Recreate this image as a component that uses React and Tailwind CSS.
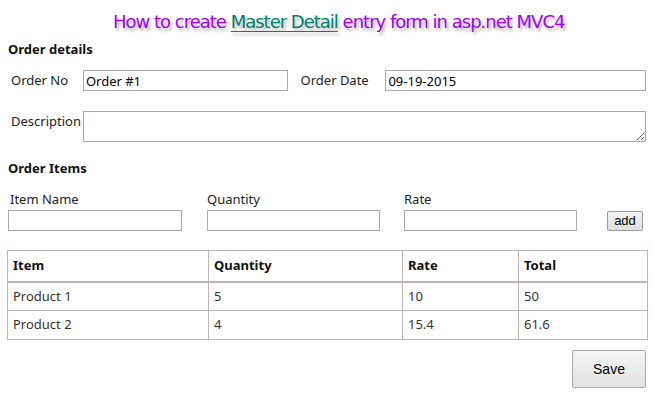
export default function App() {
  const rows = [
    ["Product 1", "5", "10", "50"],
    ["Product 2", "4", "15.4", "61.6"],
  ];
  return (
    <div className="w-[654px] h-[393px] bg-white text-[#222] overflow-hidden" style={{ fontFamily: '"Noto Sans", "Open Sans", sans-serif' }}>
      <div className="h-[40px] flex items-start pt-[8px] pl-[113px]">
        <div className="text-[18px] text-[#a000f0] whitespace-nowrap" style={{ fontFamily: '"DejaVu Sans", Verdana, sans-serif', textShadow: "2px 3px 3px rgba(0,0,0,0.3)", letterSpacing: "-1px" }}>
          How to create <span className="text-[#00806a] underline underline-offset-[3px]">Master Detail</span> entry form in asp.net MVC4
        </div>
      </div>
      <div className="px-[8px]">
        <div className="font-bold text-[13px] leading-[18px] text-[#111]">Order details</div>
        <div className="flex items-center mt-[12px] h-[21px] text-[13px]">
          <div className="w-[75px] pl-[3px]">Order No</div>
          <input className="w-[205px] h-[21px] border border-[#a9a9a9] px-[2px] text-[13px] text-black outline-none" defaultValue="Order #1" />
          <div className="w-[98px] pl-[13px]">Order Date</div>
          <input className="w-[261px] h-[21px] border border-[#a9a9a9] px-[2px] text-[13px] text-black outline-none" defaultValue="09-19-2015" />
        </div>
        <div className="flex items-start mt-[20px] text-[13px]">
          <div className="w-[75px] pl-[3px] pt-[1px]">Description</div>
          <textarea className="w-[564px] h-[31px] border border-[#a9a9a9] outline-none resize-y block" />
        </div>
        <div className="font-bold text-[13px] leading-[18px] text-[#111] mt-[17px]">Order Items</div>
        <div className="flex items-end mt-[14px] text-[13px]">
          <div className="w-[199px] flex flex-col">
            <div className="pl-[2px] leading-[16px] mb-[3px]">Item Name</div>
            <input className="w-[174px] h-[21px] border border-[#a9a9a9] outline-none" />
          </div>
          <div className="w-[197px] flex flex-col">
            <div className="leading-[16px] mb-[3px]">Quantity</div>
            <input className="w-[173px] h-[21px] border border-[#a9a9a9] outline-none" />
          </div>
          <div className="w-[203px] flex flex-col">
            <div className="leading-[16px] mb-[3px]">Rate</div>
            <input className="w-[173px] h-[21px] border border-[#a9a9a9] outline-none" />
          </div>
          <button className="w-[36px] h-[20px] border border-[#9a9a9a] rounded-[2px] bg-gradient-to-b from-[#f4f4f4] to-[#dedede] text-[13px] leading-[18px] text-black" style={{ fontFamily: '"Liberation Sans", Arial, sans-serif' }}>add</button>
        </div>
        <table className="mt-[19px] w-[641px] -ml-[1px] border-collapse text-[13px]">
          <thead>
            <tr className="h-[31px] border-b-2 border-[#c0b3b3]">
              <th className="w-[201px] text-left font-bold pl-[5px] border border-[#c0b3b3] text-[#111]">Item</th>
              <th className="w-[194px] text-left font-bold pl-[5px] border border-[#c0b3b3] text-[#111]">Quantity</th>
              <th className="w-[116px] text-left font-bold pl-[5px] border border-[#c0b3b3] text-[#111]">Rate</th>
              <th className="text-left font-bold pl-[5px] border border-[#c0b3b3] text-[#111]">Total</th>
            </tr>
          </thead>
          <tbody>
            {rows.map((r, i) => (
              <tr key={i} className="h-[29px]">
                {r.map((c, j) => (
                  <td key={j} className="pl-[5px] border border-[#c0b3b3] text-[#333]">{c}</td>
                ))}
              </tr>
            ))}
          </tbody>
        </table>
        <div className="flex justify-end mt-[10px] pr-[0px]">
          <button className="w-[74px] h-[38px] border border-[#a9a9a9] rounded-[2px] bg-gradient-to-b from-[#f5f5f5] to-[#e2e2e2] text-[14px] text-black" style={{ fontFamily: '"Liberation Sans", Arial, sans-serif' }}>Save</button>
        </div>
      </div>
    </div>
  );
}
